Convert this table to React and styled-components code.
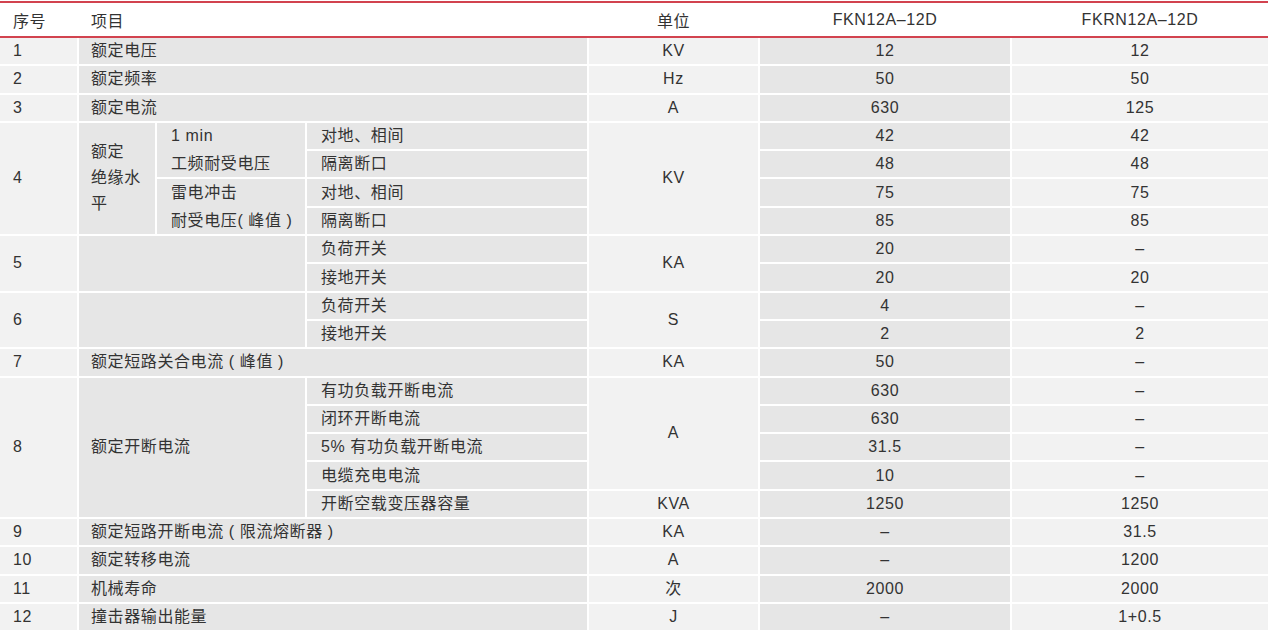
import styled, { createGlobalStyle } from 'styled-components';

const GlobalStyle = createGlobalStyle`
  html, body {
    margin: 0;
    padding: 0;
    background: #fff;
  }
  body {
    font-family: "Liberation Sans", "Noto Sans CJK SC", sans-serif;
    color: #333;
  }
`;

const COLUMNS = '77px 76px 148px 280px 169px 250px 1fr';
const RED = '#d2434f';
const LIGHT = '#f2f2f2';
const DARK = '#e6e6e6';

const Table = styled.div`
  width: 1268px;
  margin-top: 1px;
  border-top: 2px solid ${RED};
`;

const HeaderRow = styled.div`
  display: grid;
  grid-template-columns: ${COLUMNS};
  column-gap: 2px;
  height: 33px;
  border-bottom: 2px solid ${RED};
`;

const HeadCell = styled.div`
  display: flex;
  align-items: center;
  justify-content: ${(p) => (p.$center ? 'center' : 'flex-start')};
  padding-left: ${(p) => (p.$center ? 0 : p.$pad || 12)}px;
  grid-column: ${(p) => p.$col} / span ${(p) => p.$span || 1};
  font-size: 16px;
  letter-spacing: 0.6px;
`;

const Body = styled.div`
  display: grid;
  grid-template-columns: ${COLUMNS};
  grid-auto-rows: 26.3px;
  gap: 2px;
  padding-top: 0;
`;

const Cell = styled.div`
  grid-column: ${(p) => p.$col} / span ${(p) => p.$colSpan || 1};
  grid-row: ${(p) => p.$row} / span ${(p) => p.$rowSpan || 1};
  background: ${(p) => p.$bg};
  display: flex;
  align-items: center;
  justify-content: ${(p) => (p.$center ? 'center' : 'flex-start')};
  padding-left: ${(p) => (p.$center ? 0 : p.$pad)}px;
  font-size: 16px;
  line-height: 26px;
  letter-spacing: 0.6px;
  white-space: nowrap;
`;

const Lines = styled.span`
  display: block;
  line-height: ${(p) => p.$lh || 26}px;
`;

const colBg = (col) => (col === 1 || col === 5 || col === 7 ? LIGHT : DARK);
const colPad = (col) => (col === 1 ? 13 : col === 2 ? 12 : 14);

// [row, col, text, rowSpan, colSpan]
const cells = [
  [1, 1, '1'], [1, 2, '额定电压', 1, 3], [1, 5, 'KV'], [1, 6, '12'], [1, 7, '12'],
  [2, 1, '2'], [2, 2, '额定频率', 1, 3], [2, 5, 'Hz'], [2, 6, '50'], [2, 7, '50'],
  [3, 1, '3'], [3, 2, '额定电流', 1, 3], [3, 5, 'A'], [3, 6, '630'], [3, 7, '125'],

  [4, 1, '4', 4], [4, 2, ['额定', '绝缘水', '平'], 4], [4, 3, ['1 min', '工频耐受电压'], 2],
  [6, 3, ['雷电冲击', '耐受电压( 峰值 )'], 2],
  [4, 4, '对地、相间'], [5, 4, '隔离断口'], [6, 4, '对地、相间'], [7, 4, '隔离断口'],
  [4, 5, 'KV', 4],
  [4, 6, '42'], [5, 6, '48'], [6, 6, '75'], [7, 6, '85'],
  [4, 7, '42'], [5, 7, '48'], [6, 7, '75'], [7, 7, '85'],

  [8, 1, '5', 2], [8, 2, '', 2, 2], [8, 4, '负荷开关'], [9, 4, '接地开关'], [8, 5, 'KA', 2],
  [8, 6, '20'], [9, 6, '20'], [8, 7, '–'], [9, 7, '20'],

  [10, 1, '6', 2], [10, 2, '', 2, 2], [10, 4, '负荷开关'], [11, 4, '接地开关'], [10, 5, 'S', 2],
  [10, 6, '4'], [11, 6, '2'], [10, 7, '–'], [11, 7, '2'],

  [12, 1, '7'], [12, 2, '额定短路关合电流 ( 峰值 )', 1, 3], [12, 5, 'KA'], [12, 6, '50'], [12, 7, '–'],

  [13, 1, '8', 5], [13, 2, '额定开断电流', 5, 2],
  [13, 4, '有功负载开断电流'], [14, 4, '闭环开断电流'], [15, 4, '5% 有功负载开断电流'],
  [16, 4, '电缆充电电流'], [17, 4, '开断空载变压器容量'],
  [13, 5, 'A', 4], [17, 5, 'KVA'],
  [13, 6, '630'], [14, 6, '630'], [15, 6, '31.5'], [16, 6, '10'], [17, 6, '1250'],
  [13, 7, '–'], [14, 7, '–'], [15, 7, '–'], [16, 7, '–'], [17, 7, '1250'],

  [18, 1, '9'], [18, 2, '额定短路开断电流 ( 限流熔断器 )', 1, 3], [18, 5, 'KA'], [18, 6, '–'], [18, 7, '31.5'],
  [19, 1, '10'], [19, 2, '额定转移电流', 1, 3], [19, 5, 'A'], [19, 6, '–'], [19, 7, '1200'],
  [20, 1, '11'], [20, 2, '机械寿命', 1, 3], [20, 5, '次'], [20, 6, '2000'], [20, 7, '2000'],
  [21, 1, '12'], [21, 2, '撞击器输出能量', 1, 3], [21, 5, 'J'], [21, 6, '–'], [21, 7, '1+0.5'],
];

const renderText = (text, col) => {
  if (!Array.isArray(text)) return text;
  return (
    <Lines $lh={col === 3 ? 28 : 26}>
      {text.map((line) => (
        <div key={line}>{line}</div>
      ))}
    </Lines>
  );
};

export default function App() {
  return (
    <>
      <GlobalStyle />
      <Table>
        <HeaderRow>
          <HeadCell $col={1} $pad={13}>序号</HeadCell>
          <HeadCell $col={2} $span={3}>项目</HeadCell>
          <HeadCell $col={5} $center>单位</HeadCell>
          <HeadCell $col={6} $center>FKN12A–12D</HeadCell>
          <HeadCell $col={7} $center>FKRN12A–12D</HeadCell>
        </HeaderRow>
        <Body>
          {cells.map(([row, col, text, rowSpan, colSpan]) => (
            <Cell
              key={`${row}-${col}`}
              $row={row}
              $col={col}
              $rowSpan={rowSpan}
              $colSpan={colSpan}
              $bg={colBg(col)}
              $center={col >= 5}
              $pad={colPad(col)}
            >
              {renderText(text, col)}
            </Cell>
          ))}
        </Body>
      </Table>
    </>
  );
}
